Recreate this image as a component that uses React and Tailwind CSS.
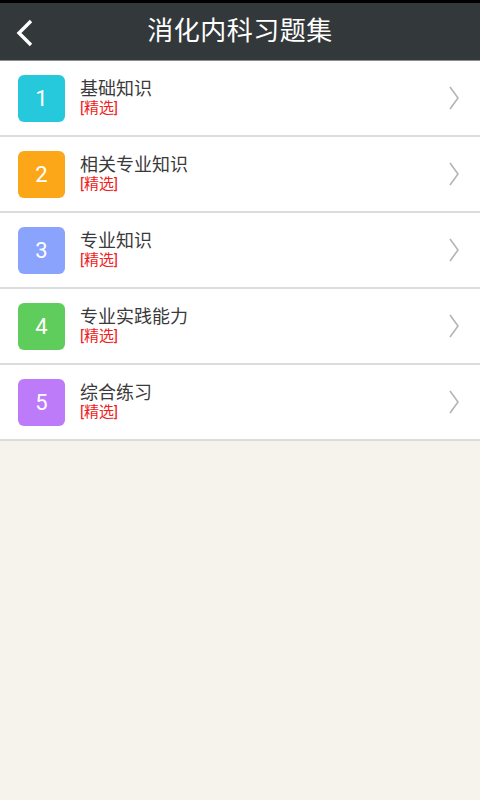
const items = [
  { n: 1, title: "基础知识", color: "bg-[#26c8dc]" },
  { n: 2, title: "相关专业知识", color: "bg-[#fba718]" },
  { n: 3, title: "专业知识", color: "bg-[#8aa3fc]" },
  { n: 4, title: "专业实践能力", color: "bg-[#5fcd5c]" },
  { n: 5, title: "综合练习", color: "bg-[#bd7bfa]" },
];

export default function App() {
  return (
    <div
      className="w-[480px] h-[800px] bg-[#f6f3ec] flex flex-col"
      style={{ fontFamily: '"Roboto", "Noto Sans CJK SC", sans-serif' }}
    >
      {/* 状态栏 + 标题栏 */}
      <div className="h-[3px] bg-black" />
      <header className="h-[58px] bg-[#33383b] flex items-center relative border-b border-[#8c8f90]">
        <svg
          className="absolute left-[14px] top-[16px]"
          width="22"
          height="28"
          viewBox="0 0 22 28"
        >
          <path d="M17 2 L5 14 L17 26" stroke="white" strokeWidth="3.4" fill="none" />
        </svg>
        <h1 className="flex-1 text-center text-white text-[26px] tracking-[0.5px]">
          消化内科习题集
        </h1>
      </header>

      {/* 列表 */}
      <ul className="bg-white">
        {items.map((it) => (
          <li
            key={it.n}
            className="h-[76px] flex items-center pl-[18px] pr-[20px] border-b-2 border-[#dcdcdc]"
          >
            <div
              className={`${it.color} w-[47px] h-[47px] rounded-[6px] flex items-center justify-center text-white text-[22px]`}
            >
              {it.n}
            </div>
            <div className="ml-[15px] flex-1 flex flex-col leading-none">
              <span className="text-[18px] text-[#3a3a3a]">{it.title}</span>
              <span className="text-[15px] text-[#f02020] mt-[3px]">[精选]</span>
            </div>
            <svg width="12" height="24" viewBox="0 0 12 24">
              <path d="M2 1 L10 12 L2 23" stroke="#b4b4b4" strokeWidth="1.6" fill="none" />
            </svg>
          </li>
        ))}
      </ul>
    </div>
  );
}
